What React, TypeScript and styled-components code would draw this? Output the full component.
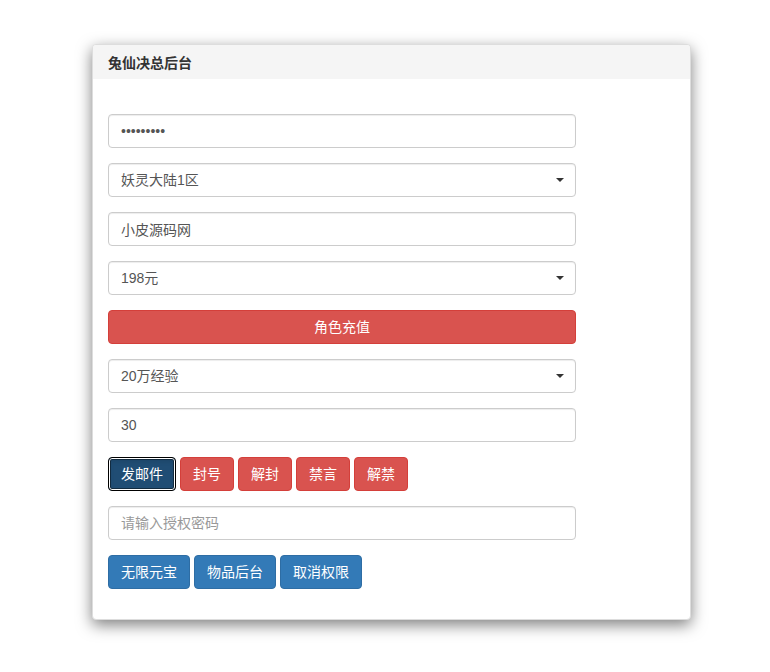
import React from 'react'
import styled, { createGlobalStyle, css } from 'styled-components'

const GlobalStyle = createGlobalStyle`
  html, body {
    margin: 0;
    padding: 0;
    background: #fff;
  }
  body {
    font-family: "Liberation Sans", "Noto Sans CJK SC", sans-serif;
    font-size: 14px;
    color: #333;
  }
  * { box-sizing: border-box; }
`

const Page = styled.div`
  padding: 44px 0 0 92px;
  height: 672px;
`

const Panel = styled.div`
  width: 599px;
  background: #fff;
  border: 1px solid #ddd;
  border-radius: 4px;
  box-shadow: 0 5px 15px rgba(0, 0, 0, 0.5);
`

const Heading = styled.div`
  height: 34px;
  padding: 0 15px;
  display: flex;
  align-items: center;
  background: #f5f5f5;
  border-top-left-radius: 3px;
  border-top-right-radius: 3px;
  font-size: 14px;
  font-weight: bold;
  color: #333;
`

const Body = styled.div`
  padding: 35px 15px 30px;
  display: flex;
  flex-direction: column;
  gap: 15px;
`

const fieldBase = css`
  display: block;
  width: 468px;
  height: 34px;
  padding: 6px 12px;
  font-family: inherit;
  font-size: 14px;
  color: #555;
  background: #fff;
  border: 1px solid #ccc;
  border-radius: 4px;
  box-shadow: inset 0 1px 1px rgba(0, 0, 0, 0.075);
  outline: none;
  &::placeholder { color: #999; }
`

const Input = styled.input`
  ${fieldBase}
`

const SelectWrap = styled.div`
  position: relative;
  width: 468px;
  &::after {
    content: '';
    position: absolute;
    right: 12px;
    top: 15px;
    border-left: 4px solid transparent;
    border-right: 4px solid transparent;
    border-top: 4px solid #333;
    pointer-events: none;
  }
`

const Select = styled.select`
  ${fieldBase}
  appearance: none;
  -webkit-appearance: none;
`

const Row = styled.div`
  display: flex;
  gap: 4px;
`

const Btn = styled.button<{ $tone: 'danger' | 'primary'; $block?: boolean; $focus?: boolean }>`
  height: 34px;
  padding: 6px 12px;
  font-family: inherit;
  font-size: 14px;
  line-height: 20px;
  color: #fff;
  border-radius: 4px;
  border: 1px solid;
  cursor: pointer;
  white-space: nowrap;
  background: ${p => (p.$tone === 'danger' ? '#d9534f' : '#337ab7')};
  border-color: ${p => (p.$tone === 'danger' ? '#d43f3a' : '#2e6da4')};
  ${p => p.$block && css`width: 468px;`}
  ${p =>
    p.$focus &&
    css`
      background: #204d74;
      border-color: #000;
      box-shadow: inset 0 0 0 1px #fff, inset 0 0 0 2px #122b40, inset 0 3px 5px rgba(0, 0, 0, 0.125);
    `}
`

function Dropdown({ value, options }: { value: string; options: string[] }) {
  return (
    <SelectWrap>
      <Select defaultValue={value}>
        {options.map(o => (
          <option key={o}>{o}</option>
        ))}
      </Select>
    </SelectWrap>
  )
}

export default function App() {
  return (
    <Page>
      <GlobalStyle />
      <Panel>
        <Heading>兔仙决总后台</Heading>
        <Body>
          <Input type="password" defaultValue="123456789" />
          <Dropdown value="妖灵大陆1区" options={['妖灵大陆1区', '妖灵大陆2区']} />
          <Input defaultValue="小皮源码网" />
          <Dropdown value="198元" options={['6元', '30元', '98元', '198元', '328元', '648元']} />
          <Btn $tone="danger" $block>角色充值</Btn>
          <Dropdown value="20万经验" options={['10万经验', '20万经验', '50万经验']} />
          <Input defaultValue="30" />
          <Row>
            <Btn $tone="primary" $focus>发邮件</Btn>
            <Btn $tone="danger">封号</Btn>
            <Btn $tone="danger">解封</Btn>
            <Btn $tone="danger">禁言</Btn>
            <Btn $tone="danger">解禁</Btn>
          </Row>
          <Input placeholder="请输入授权密码" />
          <Row>
            <Btn $tone="primary">无限元宝</Btn>
            <Btn $tone="primary">物品后台</Btn>
            <Btn $tone="primary">取消权限</Btn>
          </Row>
        </Body>
      </Panel>
    </Page>
  )
}
